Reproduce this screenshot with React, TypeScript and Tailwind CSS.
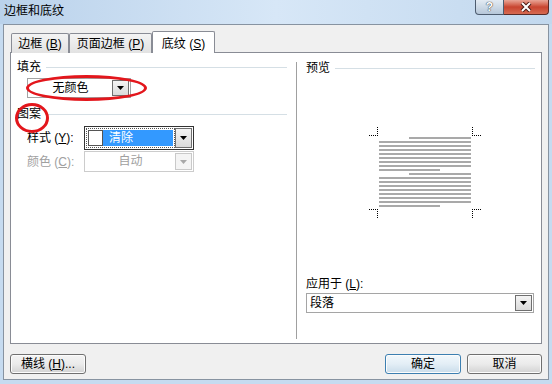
import type { ReactNode } from "react";

// Win7-style "边框和底纹" dialog, 底纹 tab selected

function Arrow({ color = "#000" }: { color?: string }) {
  return (
    <svg width="7" height="4" viewBox="0 0 7 4">
      <polygon points="0,0 7,0 3.5,4" fill={color} />
    </svg>
  );
}

function DropButton({ disabled = false }: { disabled?: boolean }) {
  return (
    <div
      className={
        disabled
          ? "w-[17px] h-full border border-[#c9c9c9] bg-[#f4f4f4] flex items-center justify-center"
          : "w-[17px] h-full border border-[#6f6f6f] bg-gradient-to-b from-[#f4f4f4] to-[#dadada] flex items-center justify-center"
      }
    >
      <Arrow color={disabled ? "#a8a8a8" : "#000"} />
    </div>
  );
}

function Mnemonic({ label, k }: { label: string; k: string }) {
  return (
    <span>
      {label} (<span className="underline">{k}</span>)
    </span>
  );
}

function GroupHeader({ title, className = "" }: { title: string; className?: string }) {
  return (
    <div className={"flex items-center h-[14px] " + className}>
      <span className="leading-none">{title}</span>
      <div className="flex-1 h-px bg-[#d5dfe5] ml-[5px]" />
    </div>
  );
}

function Button({ children, primary = false, className = "" }: { children: ReactNode; primary?: boolean; className?: string }) {
  return (
    <div
      className={
        (primary
          ? "border-[#3c7fb1] from-[#f2f8fc] via-[#e3eef6] to-[#c9dcea] "
          : "border-[#707070] from-[#f4f4f4] via-[#ebebeb] to-[#d2d2d2] ") +
        "h-[20px] border rounded-[3px] bg-gradient-to-b flex items-center justify-center shadow-[inset_0_0_0_1px_#fcfcfc] " +
        className
      }
    >
      {children}
    </div>
  );
}

function Preview() {
  const lines = [];
  for (let i = 0; i < 18; i++) {
    const k = i % 9;
    const x1 = k === 0 ? 40 : 10;
    const x2 = k === 8 ? 71 : 102;
    lines.push(<rect key={i} x={x1} y={10 + i * 4} width={x2 - x1} height={2} fill="#a9a9a9" />);
  }
  const dot = { stroke: "#000", strokeWidth: 1, strokeDasharray: "1 1" };
  return (
    <svg width="112" height="92" viewBox="0 0 112 92">
      {lines}
      <line x1="0" y1="8.5" x2="9" y2="8.5" {...dot} />
      <line x1="8.5" y1="0" x2="8.5" y2="9" {...dot} />
      <line x1="103" y1="8.5" x2="112" y2="8.5" {...dot} />
      <line x1="103.5" y1="0" x2="103.5" y2="9" {...dot} />
      <line x1="0" y1="82.5" x2="9" y2="82.5" {...dot} />
      <line x1="8.5" y1="82" x2="8.5" y2="92" {...dot} />
      <line x1="103" y1="82.5" x2="112" y2="82.5" {...dot} />
      <line x1="103.5" y1="82" x2="103.5" y2="92" {...dot} />
    </svg>
  );
}

export default function App() {
  return (
    <div className="w-[552px] h-[384px] overflow-hidden bg-[#c6dbf0] flex flex-col text-[12px] text-black font-['Liberation_Sans','Noto_Sans_CJK_SC',sans-serif]">
      {/* Title bar */}
      <div className="h-[24px] flex items-start bg-gradient-to-r from-[#bad2eb] via-[#d7e7f7] to-[#c2d8ee]">
        <span className="pl-[4px] pt-[4px] text-[12px] leading-[15px]">边框和底纹</span>
        <div className="ml-auto mr-[3px] flex h-[15px]">
          <div className="w-[29px] h-full border border-t-0 border-[#4d5c6f] rounded-bl-[4px] bg-gradient-to-b from-[#e3ebf3] to-[#b6c7d9] flex items-center justify-center text-[12px] leading-none font-bold text-white [text-shadow:0_0_1px_#333,0_0_1px_#333]">
            ?
          </div>
          <div className="w-[45px] h-full border border-t-0 border-l-0 border-[#5a2b27] rounded-br-[4px] bg-gradient-to-b from-[#e8a597] via-[#c8442f] to-[#d66a52] flex items-center justify-center">
            <svg width="12" height="10" viewBox="0 0 12 10">
              <path d="M2 1 L10 9 M10 1 L2 9" stroke="#4a1a14" strokeWidth="4" />
              <path d="M2 1 L10 9 M10 1 L2 9" stroke="#fff" strokeWidth="2" />
            </svg>
          </div>
        </div>
      </div>

      {/* Dialog body */}
      <div className="mx-[3px] h-[356px] border border-[#8793a1] bg-[#f0f0f0] px-[6px] pt-[6px] flex flex-col">
        {/* Tabs */}
        <div className="flex items-end h-[22px] -mb-px pl-[1px] relative z-10">
          <div className="w-[58px] h-[20px] border border-b-0 border-[#898c95] rounded-t-[2px] bg-gradient-to-b from-[#f4f4f4] to-[#e2e2e2] flex items-center justify-center">
            <Mnemonic label="边框" k="B" />
          </div>
          <div className="w-[83px] h-[20px] border border-b-0 border-[#898c95] rounded-t-[2px] bg-gradient-to-b from-[#f4f4f4] to-[#e2e2e2] flex items-center justify-center">
            <Mnemonic label="页面边框" k="P" />
          </div>
          <div className="w-[63px] h-[22px] border border-b-0 border-[#898c95] rounded-t-[2px] bg-white flex items-start pt-[3px] justify-center">
            <Mnemonic label="底纹" k="S" />
          </div>
        </div>

        {/* Tab panel */}
        <div className="h-[292px] border border-[#898c95] bg-white flex">
          {/* Left column */}
          <div className="w-[285px] pl-[6px] pr-[9px] pt-[7px] flex flex-col">
            <GroupHeader title="填充" />
            <div className="relative mt-[4px] ml-[10px] w-[104px] h-[20px] border border-[#a3a3a3] flex items-center p-[1px]">
              <div className="flex-1 text-center">无颜色</div>
              <DropButton />
              <div className="absolute left-[-2px] top-[-4px] w-[121px] h-[26px] border-[3px] border-[#e3161c] rounded-[50%]" />
            </div>

            <div className="relative mt-[9px]">
              <GroupHeader title="图案" />
              <div className="absolute left-[-2px] top-[-4px] w-[34px] h-[30px] border-[3px] border-[#e3161c] rounded-[50%]" />
            </div>

            <div className="mt-[5px] pl-[10px] flex items-center">
              <div className="w-[57px]">
                样式 (<span className="underline">Y</span>):
              </div>
              <div className="w-[110px] h-[24px] border border-[#333] flex items-stretch p-[1px]">
                <div className="flex-1 flex items-stretch border border-dotted border-[#555] p-[1px]">
                  <div className="w-[15px] bg-white border border-[#555]" />
                  <div className="flex-1 bg-[#3399ff] text-white pl-[6px] flex items-center">清除</div>
                </div>
                <DropButton />
              </div>
            </div>

            <div className="mt-[1px] pl-[10px] flex items-center text-[#a0a0a0]">
              <div className="w-[57px]">
                颜色 (<span className="underline">C</span>):
              </div>
              <div className="w-[110px] h-[21px] border border-[#cccccc] flex items-stretch p-[1px]">
                <div className="flex-1 text-center leading-[17px]">自动</div>
                <DropButton disabled />
              </div>
            </div>
          </div>

          {/* Right column */}
          <div className="flex-1 mt-[9px] mb-[4px] border-l border-[#a0a0a0] pl-[9px] pr-[6px] flex flex-col">
            <GroupHeader title="预览" className="-mt-px h-[12px]" />
            <div className="mt-[52px] ml-[63px]">
              <Preview />
            </div>
            <div className="flex-1" />
            <div className="h-[14px] flex items-center">
              应用于 (<span className="underline">L</span>):
            </div>
            <div className="mt-[2px] mb-[26px] w-[228px] h-[20px] border border-[#a5a5a5] flex items-stretch p-[1px]">
              <div className="flex-1 pl-[2px] flex items-center">段落</div>
              <DropButton />
            </div>
          </div>
        </div>

        {/* Bottom buttons */}
        <div className="mt-[10px] flex items-center">
          <Button className="w-[76px]">
            横线 (<span className="underline">H</span>)...
          </Button>
          <Button primary className="ml-auto w-[76px]">
            确定
          </Button>
          <Button className="ml-[6px] w-[75px]">取消</Button>
        </div>
      </div>
    </div>
  );
}
